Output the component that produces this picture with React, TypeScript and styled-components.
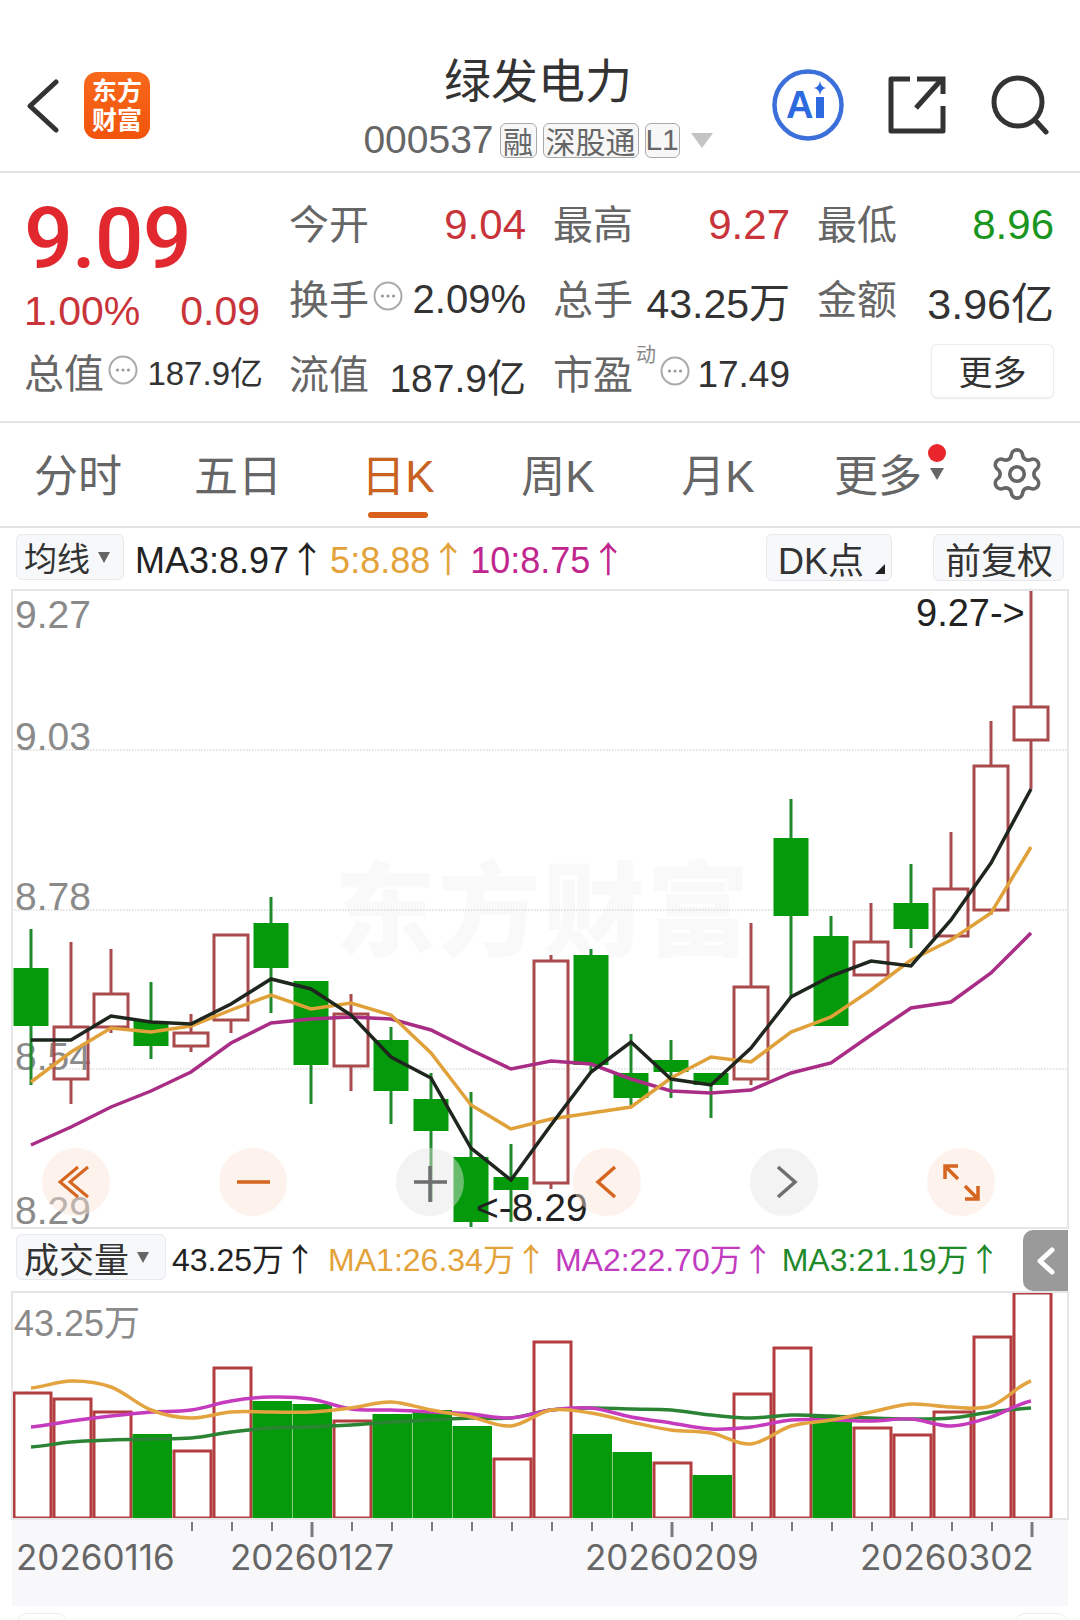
import React from 'react';
import styled, { createGlobalStyle } from 'styled-components';
import { Settings } from 'lucide-react';

const SANS = `"Liberation Sans", "Noto Sans CJK SC", sans-serif`;

const GlobalStyle = createGlobalStyle`
  html, body {
    margin: 0;
    background: #fff;
  }
  #root {
    width: 1080px;
    height: 1620px;
    overflow: hidden;
  }
  * {
    box-sizing: border-box;
  }
`;

const Page = styled.div`
  display: flex;
  flex-direction: column;
  width: 1080px;
  height: 1620px;
  overflow: hidden;
  background: #fff;
  color: #333;
  font-family: ${SANS};

  & > * {
    flex: none;
  }
`;

/* header */
const Header = styled.header`
  display: grid;
  grid-template-columns: 1fr 400px 1fr;
  height: 173px;
  border-bottom: 2px solid #e2e2e2;
`;

const HeaderLeft = styled.div`
  display: flex;
  align-items: center;
  gap: 25px;
  align-self: start;
  margin-top: 72px;
  padding-left: 26px;
`;

const Logo = styled.div`
  display: flex;
  flex-direction: column;
  align-items: center;
  justify-content: center;
  width: 66px;
  height: 67px;
  border-radius: 13px;
  background: linear-gradient(#f8691c, #f1540c);
  color: #fff;
  font-size: 25px;
  font-weight: 700;
  line-height: 29px;
`;

const HeaderCenter = styled.div`
  display: flex;
  flex-direction: column;
  align-items: center;
  margin-left: -4px;
  padding-top: 56px;
`;

const Title = styled.div`
  font-size: 47px;
  line-height: 52px;
  color: #333;
`;

const CodeRow = styled.div`
  display: flex;
  align-items: center;
  gap: 6px;
  height: 36px;
  margin-top: 14px;
  white-space: nowrap;
`;

const Code = styled.span`
  font-size: 39px;
  color: #666;
`;

const Tag = styled.span<{ $width: number }>`
  display: flex;
  align-items: center;
  justify-content: center;
  width: ${p => p.$width}px;
  height: 35px;
  border: 1px solid #aaa;
  border-radius: 6px;
  background: #f7f7f7;
  color: #666;
  font-size: 30px;
`;

const CodeCaret = styled.svg`
  margin-left: 5px;
`;

const HeaderRight = styled.div`
  display: flex;
  align-items: center;
  justify-content: flex-end;
  gap: 44px;
  align-self: start;
  margin-top: 69px;
  padding-right: 30px;
`;

/* quote block */
const Quote = styled.section`
  display: flex;
  height: 250px;
  border-bottom: 2px solid #e4e4e4;
`;

const PriceColumn = styled.div`
  display: flex;
  flex-direction: column;
  width: 289px;
  padding: 26px 0 0 24px;
  white-space: nowrap;
`;

const Price = styled.div`
  height: 80px;
  font-family: Roboto, sans-serif;
  font-size: 86px;
  font-weight: 500;
  line-height: 80px;
  letter-spacing: -1px;
  color: #e0282e;
`;

const ChangeRow = styled.div`
  display: flex;
  gap: 40px;
  margin-top: 12px;
  font-size: 41px;
  line-height: 40px;
  color: #c8343a;
`;

const TotalRow = styled.div`
  display: flex;
  align-items: center;
  margin-top: 21px;
  width: 239px;
  line-height: 40px;
`;

const TotalValue = styled.span`
  margin-left: auto;
  font-size: 33px;
  color: #333;
`;

const Metrics = styled.div`
  display: grid;
  grid-template-columns: repeat(3, 237px);
  grid-auto-rows: 75px;
  column-gap: 27px;
  padding-top: 14px;
`;

const Metric = styled.div`
  display: flex;
  align-items: center;
  white-space: nowrap;
`;

const MetricLabel = styled.span`
  font-size: 40px;
  line-height: 44px;
  color: #666;
`;

const MetricValue = styled.span<{ $tone?: 'up' | 'down'; $size: number }>`
  margin-left: auto;
  font-size: ${p => p.$size}px;
  color: ${p => (p.$tone === 'up' ? '#c8343a' : p.$tone === 'down' ? '#1a961f' : '#333')};
`;

const Superscript = styled.span`
  align-self: flex-start;
  margin: 2px 0 0 3px;
  font-size: 20px;
  color: #888;
`;

const InfoMark = styled.svg`
  margin: -8px 0 0 4px;
`;

const MoreButton = styled.button`
  justify-self: end;
  align-self: center;
  width: 123px;
  height: 54px;
  margin-bottom: 8px;
  padding: 0;
  border: 1px solid #ececec;
  border-radius: 6px;
  background: #fff;
  box-shadow: 0 1px 2px rgba(0, 0, 0, 0.08);
  color: #333;
  font-family: ${SANS};
  font-size: 34px;
`;

/* period tabs */
const Tabs = styled.nav`
  display: flex;
  height: 105px;
  padding-top: 32px;
  border-bottom: 2px solid #e2e2e2;
`;

const TabList = styled.div`
  display: flex;
  margin-left: -2px;
`;

const Tab = styled.div<{ $active?: boolean }>`
  position: relative;
  display: flex;
  flex-direction: column;
  align-items: center;
  width: 160px;
  font-size: 44px;
  line-height: 44px;
  color: ${p => (p.$active ? '#c9621f' : '#666')};
`;

const TabMark = styled.div`
  width: 60px;
  height: 6px;
  margin-top: 13px;
  border-radius: 3px;
  background: #d9601a;
`;

const RedDot = styled.span`
  position: absolute;
  top: -11px;
  left: 130px;
  width: 18px;
  height: 18px;
  border-radius: 50%;
  background: #e8262b;
`;

const TabCaret = styled.span`
  position: absolute;
  top: 13px;
  left: 132px;
  width: 0;
  height: 0;
  border-left: 7px solid transparent;
  border-right: 7px solid transparent;
  border-top: 12px solid #666;
`;

const GearSlot = styled.div`
  margin: -10px 0 0 30px;
  color: #666;
`;

/* indicator rows */
const IndicatorRow = styled.div<{ $height: number }>`
  position: relative;
  display: flex;
  align-items: flex-start;
  height: ${p => p.$height}px;
  padding: 6px 16px 0 16px;
  white-space: nowrap;
`;

const SelectButton = styled.div<{ $width: number; $size: number }>`
  position: relative;
  display: flex;
  align-items: center;
  flex: none;
  width: ${p => p.$width}px;
  height: 46px;
  padding-left: 7px;
  border: 1px solid #e8e9ec;
  border-radius: 6px;
  background: #f7f8fa;
  color: #333;
  font-size: ${p => p.$size}px;
`;

const Caret = styled.span`
  width: 0;
  height: 0;
  margin-left: 8px;
  border-left: 6px solid transparent;
  border-right: 6px solid transparent;
  border-top: 11px solid #666;
`;

const CornerMark = styled.span`
  position: absolute;
  right: 6px;
  bottom: 6px;
  width: 0;
  height: 0;
  border-left: 10px solid transparent;
  border-bottom: 10px solid #222;
`;

const Readout = styled.span<{ $color: string; $size: number; $gap: number }>`
  flex: none;
  margin-left: ${p => p.$gap}px;
  color: ${p => p.$color};
  font-size: ${p => p.$size}px;
  line-height: 46px;
`;

const UpArrow = styled.span`
  font-family: "Noto Sans CJK SC", sans-serif;
`;

const RightButtons = styled.div`
  display: flex;
  gap: 41px;
  margin-left: auto;
`;

const FlagButton = styled.div<{ $width: number }>`
  position: relative;
  display: flex;
  align-items: center;
  width: ${p => p.$width}px;
  height: 47px;
  padding-left: 11px;
  border: 1px solid #e8e9ec;
  border-radius: 6px;
  background: #f7f8fa;
  color: #333;
  font-size: 36px;
`;

const CollapseTab = styled.div`
  position: absolute;
  top: 2px;
  right: 12px;
  display: flex;
  align-items: center;
  justify-content: center;
  width: 45px;
  height: 61px;
  border-radius: 10px 0 0 10px;
  background: #9a9a9a;
`;

/* charts */
const ChartPanel = styled.div<{ $height: number }>`
  position: relative;
  width: 1056px;
  height: ${p => p.$height}px;
  margin-left: 12px;
  outline: 2px solid #e6e6e6;
  outline-offset: -1px;

  svg.plot {
    display: block;
    overflow: visible;
  }
`;

const AxisText = styled.text<{ $color?: string; $size: number }>`
  fill: ${p => p.$color || '#8a8a8a'};
  font-family: ${SANS};
  font-size: ${p => p.$size}px;
`;

const Watermark = styled.text`
  fill: #f9f9f9;
  font-family: ${SANS};
  font-size: 102px;
  font-weight: 900;
`;

const ZoomBar = styled.div`
  position: absolute;
  top: 558px;
  left: 30px;
  display: flex;
  gap: 109px;
`;

const ZoomButton = styled.div<{ $accent?: boolean }>`
  width: 68px;
  height: 68px;
  border-radius: 50%;
  background: ${p => (p.$accent ? 'rgba(250, 226, 212, 0.45)' : 'rgba(228, 228, 228, 0.45)')};
  color: ${p => (p.$accent ? '#d5651f' : '#6e6e6e')};
`;

const DateAxis = styled.div`
  width: 1056px;
  height: 87px;
  margin-left: 12px;
  background: #f8f8fa;

  svg {
    display: block;
  }
`;

const DateText = styled.text`
  fill: #666;
  font-family: Inter, sans-serif;
  font-size: 35px;
`;

const FooterRow = styled.div`
  display: flex;
  justify-content: space-between;
  padding: 7px 12px 0 17px;
`;

const FooterPill = styled.div<{ $width: number }>`
  width: ${p => p.$width}px;
  height: 40px;
  border: 1px solid #ececec;
  border-radius: 10px;
`;

const RED = '#a94a4c';
const GREEN_BODY = '#059a0c';
const GREEN_WICK = '#1f8a2c';

type Candle = [boolean, number, number, number, number];

// rising, wick top, body top, body bottom, wick bottom
const CANDLES: Candle[] = [
  [false, 929, 968, 1026, 1085],
  [true, 942, 1027, 1079, 1104],
  [true, 949, 994, 1027, 1033],
  [false, 982, 1021, 1046, 1059],
  [true, 1014, 1033, 1046, 1052],
  [true, 935, 935, 1020, 1033],
  [false, 897, 923, 968, 1013],
  [false, 981, 981, 1065, 1104],
  [true, 994, 1014, 1066, 1091],
  [false, 1027, 1040, 1091, 1124],
  [false, 1073, 1099, 1131, 1202],
  [false, 1092, 1157, 1222, 1228],
  [false, 1144, 1177, 1190, 1222],
  [true, 955, 961, 1183, 1189],
  [false, 949, 955, 1065, 1072],
  [false, 1034, 1073, 1098, 1105],
  [false, 1040, 1060, 1072, 1098],
  [false, 1073, 1073, 1085, 1118],
  [true, 923, 987, 1079, 1085],
  [false, 799, 838, 916, 997],
  [false, 916, 936, 1026, 1026],
  [true, 903, 942, 975, 975],
  [false, 864, 903, 929, 948],
  [true, 832, 889, 936, 936],
  [true, 721, 766, 910, 915],
  [true, 590, 707, 740, 789],
];

const MA_BLACK = [1040, 1040, 1016, 1022, 1024, 1004, 979, 989, 1015, 1057, 1078, 1148, 1180, 1125, 1072, 1042, 1079, 1085, 1048, 997, 976, 961, 966, 920, 863, 789];
const MA_ORANGE = [1082, 1052, 1028, 1032, 1026, 1010, 995, 1009, 1003, 1015, 1053, 1105, 1129, 1119, 1113, 1107, 1078, 1057, 1062, 1032, 1017, 990, 960, 940, 913, 847];
const MA_MAGENTA = [1145, 1127, 1107, 1091, 1072, 1043, 1023, 1019, 1017, 1019, 1030, 1050, 1069, 1061, 1064, 1079, 1091, 1093, 1090, 1073, 1063, 1035, 1008, 1002, 973, 933];

const VOLUMES: [boolean, number][] = [
  [true, 1393], [true, 1399], [true, 1412], [false, 1434], [true, 1451], [true, 1368],
  [false, 1401], [false, 1404], [true, 1421], [false, 1414], [false, 1410], [false, 1426],
  [true, 1459], [true, 1342], [false, 1434], [false, 1452], [true, 1463], [false, 1475],
  [true, 1394], [true, 1348], [false, 1417], [true, 1428], [true, 1435], [true, 1412],
  [true, 1337], [true, 1293],
];

const VOL_ORANGE = [1388, 1381, 1387, 1410, 1418, 1412, 1412, 1412, 1408, 1402, 1410, 1417, 1426, 1410, 1413, 1422, 1430, 1433, 1444, 1426, 1420, 1412, 1404, 1407, 1406, 1381];
const VOL_MAGENTA = [1427, 1421, 1416, 1412, 1410, 1401, 1397, 1399, 1409, 1410, 1412, 1414, 1418, 1410, 1408, 1417, 1423, 1429, 1427, 1420, 1420, 1421, 1419, 1426, 1417, 1401];
const VOL_GREEN = [1447, 1442, 1440, 1439, 1438, 1432, 1428, 1427, 1425, 1422, 1420, 1418, 1418, 1410, 1408, 1409, 1410, 1415, 1418, 1415, 1416, 1418, 1419, 1418, 1412, 1408];

const slotX = (i: number) => 31 + 40 * i;

const polyline = (ys: number[]) => ys.map((y, i) => `${slotX(i)},${y}`).join(' ');

// Catmull-Rom through the points, the volume averages are drawn as soft curves
const smoothPath = (ys: number[]) => {
  let d = `M${slotX(0)} ${ys[0]}`;
  for (let i = 0; i < ys.length - 1; i++) {
    const prev = ys[Math.max(i - 1, 0)];
    const next = ys[Math.min(i + 2, ys.length - 1)];
    const c1 = ys[i] + (ys[i + 1] - prev) / 6;
    const c2 = ys[i + 1] - (next - ys[i]) / 6;
    d += ` C${slotX(i) + 13.3} ${c1} ${slotX(i) + 26.7} ${c2} ${slotX(i + 1)} ${ys[i + 1]}`;
  }
  return d;
};

const BackIcon = () => (
  <svg width="33" height="54" viewBox="0 0 33 54" fill="none" stroke="#333" strokeWidth="5" strokeLinecap="round" strokeLinejoin="round">
    <path d="M30 3 L4 27 L30 51" />
  </svg>
);

const AiIcon = () => (
  <svg width="72" height="72" viewBox="0 0 72 72">
    <circle cx="36" cy="36" r="33.5" fill="#fff" stroke="#3b6fd9" strokeWidth="4.5" />
    <text x="14" y="49" fill="#2d6ae0" fontFamily="Liberation Sans, sans-serif" fontSize="38" fontWeight="700">A</text>
    <rect x="44" y="28" width="8" height="21" fill="#2d6ae0" />
    <path d="M48 12 Q49 18 54 19 Q49 20 48 26 Q47 20 42 19 Q47 18 48 12 Z" fill="#2d6ae0" />
  </svg>
);

const ShareIcon = () => (
  <svg width="58" height="58" viewBox="0 0 58 58" fill="none" stroke="#333" strokeWidth="5">
    <path d="M22 3 H3 V55 H55 V30" strokeLinejoin="round" />
    <path d="M28 32 L54 3" />
    <path d="M29 3 H55 V18" />
  </svg>
);

const SearchIcon = () => (
  <svg width="60" height="60" viewBox="0 0 60 60" fill="none" stroke="#333" strokeWidth="5" strokeLinecap="round">
    <circle cx="28" cy="27" r="24" />
    <path d="M45 45 L56 57" />
  </svg>
);

const InfoDots = () => (
  <InfoMark width="30" height="30" viewBox="0 0 30 30">
    <circle cx="15" cy="15" r="13.5" fill="none" stroke="#aaa" strokeWidth="2" />
    <circle cx="9.5" cy="15" r="1.6" fill="#999" />
    <circle cx="15" cy="15" r="1.6" fill="#999" />
    <circle cx="20.5" cy="15" r="1.6" fill="#999" />
  </InfoMark>
);

const ChevronLeft = () => (
  <svg width="18" height="28" viewBox="0 0 18 28" fill="none" stroke="#fff" strokeWidth="5" strokeLinecap="round" strokeLinejoin="round">
    <path d="M15 3 L3 14 L15 25" />
  </svg>
);

const ZoomGlyph = ({ d, width = 3.5 }: { d: string; width?: number }) => (
  <svg width="68" height="68" viewBox="0 0 68 68" fill="none" stroke="currentColor" strokeWidth={width}>
    <path d={d} />
  </svg>
);

const PriceChart = () => (
  <ChartPanel $height={638}>
    <svg className="plot" width="1056" height="638" viewBox="12 590 1056 638">
      <Watermark x="334" y="948" textLength="415">东方财富</Watermark>
      {[750, 910, 1069].map(y => (
        <line key={y} x1="12" x2="1068" y1={y} y2={y} stroke="#d9d9d9" strokeWidth="1.5" strokeDasharray="1.5 1.5" />
      ))}
      <AxisText $size={39} x="15" y="628">9.27</AxisText>
      <AxisText $size={39} x="15" y="750">9.03</AxisText>
      <AxisText $size={39} x="15" y="910">8.78</AxisText>
      <AxisText $size={39} x="15" y="1070">8.54</AxisText>
      <AxisText $size={39} x="15" y="1224">8.29</AxisText>
      {CANDLES.map(([rising, wickTop, bodyTop, bodyBottom, wickBottom], i) => {
        const x = slotX(i);
        const color = rising ? RED : GREEN_WICK;
        return (
          <g key={x}>
            <line x1={x} x2={x} y1={wickTop} y2={bodyTop} stroke={color} strokeWidth="3" />
            <line x1={x} x2={x} y1={bodyBottom} y2={wickBottom} stroke={color} strokeWidth="3" />
            {rising ? (
              <rect x={x - 17} y={bodyTop} width="34" height={bodyBottom - bodyTop} fill="none" stroke={RED} strokeWidth="3" />
            ) : (
              <rect x={x - 17.5} y={bodyTop} width="35" height={bodyBottom - bodyTop} fill={GREEN_BODY} />
            )}
          </g>
        );
      })}
      <polyline points={polyline(MA_MAGENTA)} fill="none" stroke="#a92c85" strokeWidth="3.5" />
      <polyline points={polyline(MA_ORANGE)} fill="none" stroke="#e0a13a" strokeWidth="3.5" />
      <polyline points={polyline(MA_BLACK)} fill="none" stroke="#1e261e" strokeWidth="3.5" />
      <AxisText $size={38} $color="#222" x="916" y="626">9.27-&gt;</AxisText>
      <AxisText $size={39} $color="#222" x="476" y="1221">&lt;-8.29</AxisText>
    </svg>
    <ZoomBar>
      <ZoomButton $accent><ZoomGlyph d="M36 19 L18 34 L36 49 M46 19 L28 34 L46 49" width={3} /></ZoomButton>
      <ZoomButton $accent><ZoomGlyph d="M18 34 H51" /></ZoomButton>
      <ZoomButton><ZoomGlyph d="M18 34 H51 M34 18 V54" /></ZoomButton>
      <ZoomButton $accent><ZoomGlyph d="M42 19 L25 34 L42 49" /></ZoomButton>
      <ZoomButton><ZoomGlyph d="M28 19 L45 34 L28 49" /></ZoomButton>
      <ZoomButton $accent><ZoomGlyph d="M18 31 V18 H31 M18 18 L31 31 M51 38 V51 H38 M51 51 L38 38" /></ZoomButton>
    </ZoomBar>
  </ChartPanel>
);

const VolumeChart = () => (
  <ChartPanel $height={227}>
    <svg className="plot" width="1056" height="227" viewBox="12 1292 1056 227">
      <AxisText $size={36} x="14" y="1336">43.25万</AxisText>
      {VOLUMES.map(([rising, top], i) => {
        const left = 12.5 + 40 * i;
        return rising ? (
          <rect key={left} x={left + 1.5} y={top} width="37" height={1518 - top} fill="none" stroke="#b23c3e" strokeWidth="3" />
        ) : (
          <rect key={left} x={left} y={top} width="39.5" height={1519 - top} fill={GREEN_BODY} />
        );
      })}
      <path d={smoothPath(VOL_GREEN)} fill="none" stroke="#2b8433" strokeWidth="3.5" />
      <path d={smoothPath(VOL_MAGENTA)} fill="none" stroke="#c63bbd" strokeWidth="3.5" />
      <path d={smoothPath(VOL_ORANGE)} fill="none" stroke="#e3a33e" strokeWidth="3.5" />
    </svg>
  </ChartPanel>
);

const TICK_SLOTS = Array.from({ length: 22 }, (_, i) => i + 4);
const LONG_TICKS = [7, 16, 25];

const Dates = () => (
  <DateAxis>
    <svg width="1056" height="87" viewBox="12 1519 1056 87">
      {TICK_SLOTS.map(i => (
        <line
          key={i}
          x1={slotX(i) + 1}
          x2={slotX(i) + 1}
          y1="1522"
          y2={LONG_TICKS.includes(i) ? 1537 : 1531}
          stroke="#7a7a7a"
          strokeWidth={LONG_TICKS.includes(i) ? 3 : 2}
        />
      ))}
      <DateText x="16" y="1570">20260116</DateText>
      <DateText x="230" y="1570">20260127</DateText>
      <DateText x="585" y="1570">20260209</DateText>
      <DateText x="860" y="1570">20260302</DateText>
    </svg>
  </DateAxis>
);

export default function App() {
  return (
    <Page>
      <GlobalStyle />
      <Header>
        <HeaderLeft>
          <BackIcon />
          <Logo>
            <span>东方</span>
            <span>财富</span>
          </Logo>
        </HeaderLeft>
        <HeaderCenter>
          <Title>绿发电力</Title>
          <CodeRow>
            <Code>000537</Code>
            <Tag $width={37}>融</Tag>
            <Tag $width={96}>深股通</Tag>
            <Tag $width={35}>L1</Tag>
            <CodeCaret width="22" height="15" viewBox="0 0 22 15">
              <path d="M0 0 H22 L11 15 Z" fill="#c4c4c4" />
            </CodeCaret>
          </CodeRow>
        </HeaderCenter>
        <HeaderRight>
          <AiIcon />
          <ShareIcon />
          <SearchIcon />
        </HeaderRight>
      </Header>

      <Quote>
        <PriceColumn>
          <Price>9.09</Price>
          <ChangeRow>
            <span>1.00%</span>
            <span>0.09</span>
          </ChangeRow>
          <TotalRow>
            <MetricLabel>总值</MetricLabel>
            <InfoDots />
            <TotalValue>187.9亿</TotalValue>
          </TotalRow>
        </PriceColumn>
        <Metrics>
          <Metric><MetricLabel>今开</MetricLabel><MetricValue $tone="up" $size={42}>9.04</MetricValue></Metric>
          <Metric><MetricLabel>最高</MetricLabel><MetricValue $tone="up" $size={42}>9.27</MetricValue></Metric>
          <Metric><MetricLabel>最低</MetricLabel><MetricValue $tone="down" $size={42}>8.96</MetricValue></Metric>
          <Metric><MetricLabel>换手</MetricLabel><InfoDots /><MetricValue $size={40}>2.09%</MetricValue></Metric>
          <Metric><MetricLabel>总手</MetricLabel><MetricValue $size={41}>43.25万</MetricValue></Metric>
          <Metric><MetricLabel>金额</MetricLabel><MetricValue $size={43}>3.96亿</MetricValue></Metric>
          <Metric><MetricLabel>流值</MetricLabel><MetricValue $size={39}>187.9亿</MetricValue></Metric>
          <Metric><MetricLabel>市盈</MetricLabel><Superscript>动</Superscript><InfoDots /><MetricValue $size={37}>17.49</MetricValue></Metric>
          <MoreButton>更多</MoreButton>
        </Metrics>
      </Quote>

      <Tabs>
        <TabList>
          <Tab>分时</Tab>
          <Tab>五日</Tab>
          <Tab $active>日K<TabMark /></Tab>
          <Tab>周K</Tab>
          <Tab>月K</Tab>
          <Tab>更多<RedDot /><TabCaret /></Tab>
        </TabList>
        <GearSlot><Settings size={58} strokeWidth={1.5} /></GearSlot>
      </Tabs>

      <IndicatorRow $height={62}>
        <SelectButton $width={108} $size={33}>均线<Caret /></SelectButton>
        <Readout $color="#222" $size={36} $gap={11}>MA3:8.97<UpArrow>↑</UpArrow></Readout>
        <Readout $color="#e3a23a" $size={36} $gap={5}>5:8.88<UpArrow>↑</UpArrow></Readout>
        <Readout $color="#c0268e" $size={36} $gap={4}>10:8.75<UpArrow>↑</UpArrow></Readout>
        <RightButtons>
          <FlagButton $width={126}>DK点<CornerMark /></FlagButton>
          <FlagButton $width={131}>前复权</FlagButton>
        </RightButtons>
      </IndicatorRow>

      <PriceChart />

      <IndicatorRow $height={64}>
        <SelectButton $width={150} $size={35}>成交量<Caret /></SelectButton>
        <Readout $color="#222" $size={32} $gap={6}>43.25万<UpArrow>↑</UpArrow></Readout>
        <Readout $color="#e3a23a" $size={32} $gap={12}>MA1:26.34万<UpArrow>↑</UpArrow></Readout>
        <Readout $color="#c23cc0" $size={32} $gap={8}>MA2:22.70万<UpArrow>↑</UpArrow></Readout>
        <Readout $color="#1f8a2a" $size={32} $gap={8}>MA3:21.19万<UpArrow>↑</UpArrow></Readout>
        <CollapseTab><ChevronLeft /></CollapseTab>
      </IndicatorRow>

      <VolumeChart />
      <Dates />

      <FooterRow>
        <FooterPill $width={50} />
        <FooterPill $width={53} />
      </FooterRow>
    </Page>
  );
}
